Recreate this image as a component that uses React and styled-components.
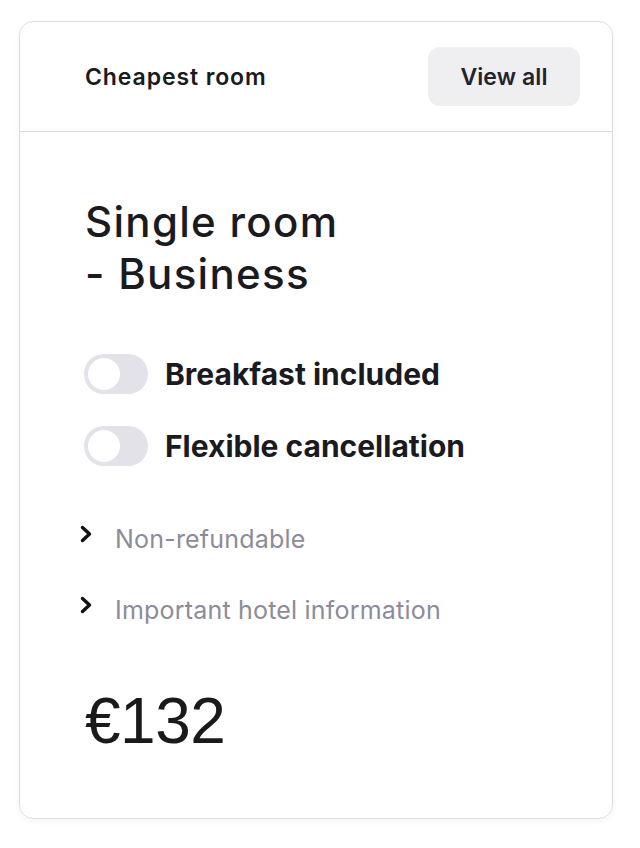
import styled, { createGlobalStyle } from "styled-components";

const GlobalStyle = createGlobalStyle`
  body {
    margin: 0;
    background: #ffffff;
    font-family: Inter, "Noto Sans", sans-serif;
    color: #1a1a1f;
  }
`;

const Page = styled.div`
  padding: 21px 27px 28px 19px;
`;

const Card = styled.section`
  width: 592px;
  height: 796px;
  border: 1px solid #dedde3;
  border-radius: 14px;
  box-shadow: 0 2px 6px rgba(30, 30, 60, 0.05);
  display: flex;
  flex-direction: column;
  overflow: hidden;
`;

const Header = styled.header`
  height: 109px;
  display: flex;
  align-items: center;
  justify-content: space-between;
  padding: 0 32px 0 65px;
  border-bottom: 1px solid #dedde3;
`;

const HeaderTitle = styled.h2`
  margin: 0;
  font-size: 23px;
  font-weight: 600;
  letter-spacing: 0.9px;
`;

const ViewAll = styled.button`
  height: 59px;
  width: 152px;
  padding: 0;
  border: none;
  border-radius: 12px;
  background: #efeff2;
  color: #23232f;
  font-family: inherit;
  font-size: 23px;
  font-weight: 600;
  letter-spacing: 0.1px;
  cursor: pointer;
`;

const Body = styled.div`
  padding: 64px 40px 0 65px;
  display: flex;
  flex-direction: column;
`;

const RoomName = styled.h1`
  margin: 0 0 54px;
  font-size: 42px;
  line-height: 52px;
  font-weight: 500;
  letter-spacing: 1.3px;
`;

const Options = styled.div`
  display: flex;
  flex-direction: column;
  gap: 32px;
  margin: 0 0 58px -1px;
`;

const Option = styled.label`
  display: flex;
  align-items: center;
  gap: 17px;
  font-size: 30px;
  font-weight: 700;
  cursor: pointer;
`;

const Track = styled.span`
  position: relative;
  width: 64px;
  height: 40px;
  border-radius: 20px;
  background: ${({ $on }) => ($on ? "#1a1a1f" : "#e2e2e8")};
  flex-shrink: 0;
`;

const Knob = styled.span`
  position: absolute;
  top: 4px;
  left: ${({ $on }) => ($on ? "28px" : "4px")};
  width: 32px;
  height: 32px;
  border-radius: 50%;
  background: #ffffff;
`;

const Details = styled.div`
  display: flex;
  flex-direction: column;
  gap: 41px;
  margin-bottom: 59px;
`;

const DetailRow = styled.div`
  display: flex;
  align-items: flex-start;
  gap: 21px;
  margin-left: -6px;
  font-size: 25px;
  line-height: 30px;
  letter-spacing: 0.2px;
  color: #8c8b9a;

  svg {
    margin-top: 1px;
    flex-shrink: 0;
  }
`;

const Price = styled.div`
  font-family: "Liberation Sans", Arial, sans-serif;
  font-size: 64px;
  letter-spacing: -0.5px;
  color: #1a1a1a;
`;

const Chevron = () => (
  <svg width="15" height="18" viewBox="0 0 15 18" fill="none">
    <path d="M3.5 2.5l7 6.5-7 6.5" stroke="#111" strokeWidth="3.4" strokeLinecap="round" strokeLinejoin="round" />
  </svg>
);

const Toggle = ({ on, children }) => (
  <Option>
    <Track $on={on}>
      <Knob $on={on} />
    </Track>
    {children}
  </Option>
);

export default function App() {
  return (
    <Page>
      <GlobalStyle />
      <Card>
        <Header>
          <HeaderTitle>Cheapest room</HeaderTitle>
          <ViewAll>View all</ViewAll>
        </Header>
        <Body>
          <RoomName>
            Single room
            <br />- Business
          </RoomName>
          <Options>
            <Toggle>Breakfast included</Toggle>
            <Toggle>Flexible cancellation</Toggle>
          </Options>
          <Details>
            <DetailRow>
              <Chevron />
              Non-refundable
            </DetailRow>
            <DetailRow>
              <Chevron />
              Important hotel information
            </DetailRow>
          </Details>
          <Price>€132</Price>
        </Body>
      </Card>
    </Page>
  );
}
